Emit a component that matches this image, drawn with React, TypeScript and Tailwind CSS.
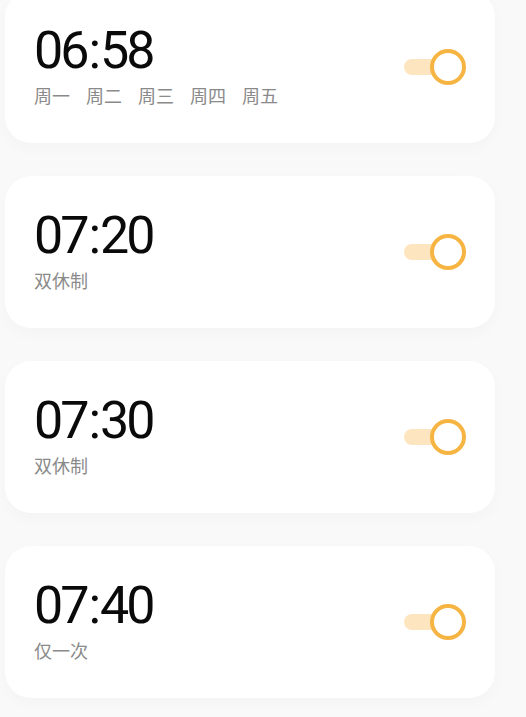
const alarms = [
  { time: "06:58", days: ["周一", "周二", "周三", "周四", "周五"] },
  { time: "07:20", days: ["双休制"] },
  { time: "07:30", days: ["双休制"] },
  { time: "07:40", days: ["仅一次"] },
];

function Toggle() {
  return (
    <div className="relative w-[64px] h-[36px] flex items-center">
      <div className="ml-[2px] w-[46px] h-[16px] rounded-full bg-[#fde6bf]" />
      <div className="absolute right-0 top-0 w-[36px] h-[36px] rounded-full border-[4px] border-[#f6b443] bg-white" />
    </div>
  );
}

function Time({ value }: { value: string }) {
  const [h, m] = value.split(":");
  return (
    <div
      className="text-[52px] leading-none tracking-[-3px] text-[#0a0a0a]"
      style={{ fontFamily: "Roboto, sans-serif" }}
    >
      {h}
      <span className="mx-[2px]">:</span>
      {m}
    </div>
  );
}

export default function App() {
  return (
    <main
      className="w-[526px] h-[717px] overflow-hidden bg-[#f9f9f9]"
      style={{ fontFamily: '"Noto Sans", "Noto Sans CJK SC", sans-serif' }}
    >
      <div className="flex flex-col gap-[33px] mt-[-9px] ml-[5px] w-[490px]">
        {alarms.map((a) => (
          <div
            key={a.time}
            className="h-[152px] rounded-[26px] bg-white shadow-[0_6px_16px_rgba(0,0,0,0.025)] flex items-center justify-between pl-[29px] pr-[29px]"
          >
            <div className="flex flex-col self-start pt-[34px]">
              <Time value={a.time} />
              <div className="mt-[10px] flex gap-[16px] text-[18px] leading-none text-[#8a8a8a]">
                {a.days.map((d) => (
                  <span key={d}>{d}</span>
                ))}
              </div>
            </div>
            <Toggle />
          </div>
        ))}
      </div>
    </main>
  );
}
